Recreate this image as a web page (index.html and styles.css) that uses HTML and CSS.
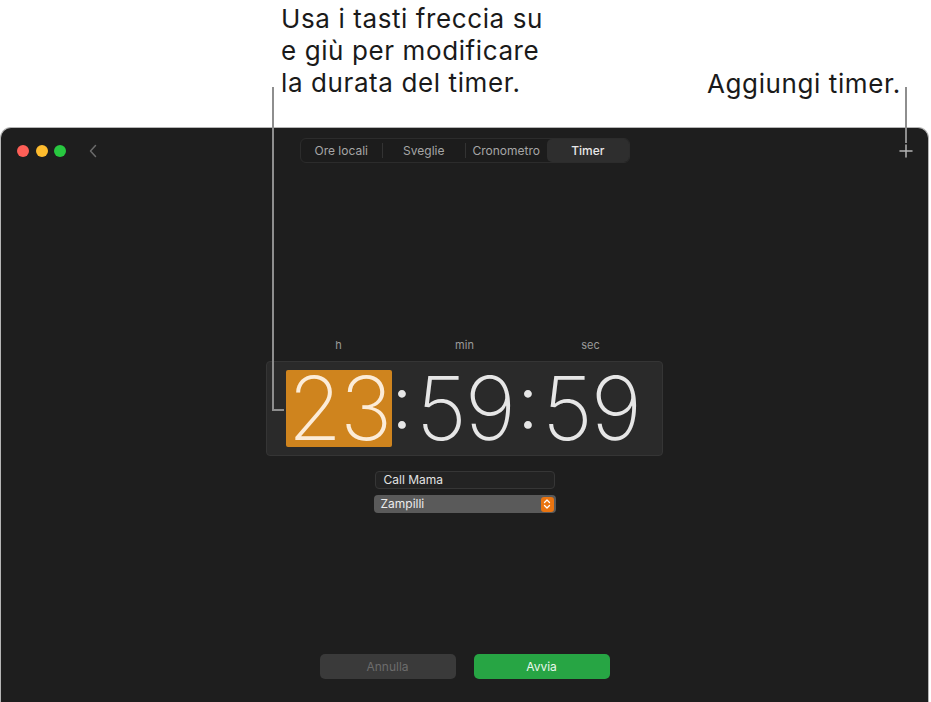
FILE: index.html
```html
<!DOCTYPE html>
<html lang="it">
<head>
<meta charset="utf-8">
<title>Timer</title>
<link rel="stylesheet" href="styles.css">
</head>
<body>
<div class="page">
  <div class="callout callout-left">Usa i tasti freccia su<br>e giù per modificare<br>la durata del timer.</div>
  <div class="callout callout-right">Aggiungi timer.</div>
  <div class="leader leader-left"></div>
  <div class="leader leader-left-foot"></div>
  <div class="leader leader-right"></div>

  <div class="window">
    <div class="titlebar">
      <div class="tb-left">
        <span class="light red"></span>
        <span class="light yellow"></span>
        <span class="light green"></span>
        <svg class="back" width="10" height="14" viewBox="0 0 10 14"><path d="M7.5 1.5 L2.5 7 L7.5 12.5" fill="none" stroke="#6b6b6b" stroke-width="1.5" stroke-linecap="round" stroke-linejoin="round"/></svg>
      </div>
      <div class="segmented">
        <span class="seg">Ore locali</span>
        <span class="sep"></span>
        <span class="seg">Sveglie</span>
        <span class="sep"></span>
        <span class="seg">Cronometro</span>
        <span class="seg selected">Timer</span>
      </div>
      <div class="tb-right">
        <svg class="plus" width="14" height="14" viewBox="0 0 14 14"><path d="M7 1 V13 M1 7 H13" stroke="#b4b4b4" stroke-width="1.5" stroke-linecap="round"/></svg>
      </div>
    </div>

    <div class="content">
      <div class="units">
        <span>h</span><span>min</span><span>sec</span>
      </div>
      <div class="clock">
        <span class="num active">23</span><span class="colon">:</span><span class="num">59</span><span class="colon">:</span><span class="num">59</span>
      </div>
      <div class="fields">
        <div class="textfield">Call Mama</div>
        <div class="popup">
          <span>Zampilli</span>
          <span class="stepper">
            <svg width="8" height="12" viewBox="0 0 8 12"><path d="M1.5 4.5 L4 2 L6.5 4.5 M1.5 7.5 L4 10 L6.5 7.5" fill="none" stroke="#fff" stroke-width="1.3" stroke-linecap="round" stroke-linejoin="round"/></svg>
          </span>
        </div>
      </div>
      <div class="buttons">
        <button class="btn cancel">Annulla</button>
        <button class="btn start">Avvia</button>
      </div>
    </div>
  </div>
</div>
</body>
</html>
```
FILE: styles.css
```css
* { box-sizing: border-box; }
html, body { margin: 0; padding: 0; background: #fff; }
body {
  font-family: Inter, "Noto Sans", "Liberation Sans", sans-serif;
  width: 931px;
  height: 702px;
  overflow: hidden;
}
.page { position: relative; width: 931px; height: 702px; padding-top: 127px; }

.callout {
  position: absolute;
  color: #1a1a1a;
  font-size: 26px;
  line-height: 32px;
  letter-spacing: 0.6px;
}
.callout-left { left: 281px; top: 3px; }
.callout-right { left: 707px; top: 68px; }

.leader { position: absolute; background: #8e8e8e; }
.leader-left { left: 272px; top: 87px; width: 2px; height: 324px; }
.leader-left-foot { left: 272px; top: 409px; width: 12px; height: 2px; }
.leader-right { left: 905px; top: 87px; width: 2px; height: 56px; }

.window {
  width: 929px;
  height: 585px;
  background: #1e1e1e;
  border: 1px solid #b5b5b5;
  border-bottom: none;
  border-radius: 11px 11px 0 0;
  display: flex;
  flex-direction: column;
}

.titlebar {
  height: 45px;
  display: grid;
  grid-template-columns: 1fr auto 1fr;
  align-items: center;
}
.tb-left { display: flex; align-items: center; padding-left: 16px; }
.light { width: 12px; height: 12px; border-radius: 50%; margin-right: 6.5px; }
.red { background: #fe5f57; }
.yellow { background: #febc2e; }
.green { background: #28c840; }
.back { margin-left: 15px; }
.tb-right { display: flex; justify-content: flex-end; padding-right: 15px; }

.segmented {
  width: 330px;
  height: 25px;
  border: 1px solid #2c2c2c;
  border-radius: 6px;
  background: #1c1c1c;
  display: flex;
  align-items: center;
}
.seg {
  flex: 1;
  text-align: center;
  font-size: 12px;
  color: #a6a6a6;
  line-height: 23px;
}
.sep { width: 1px; height: 15px; background: #333; }
.seg.selected {
  background: #2e2e2e;
  color: #e8e8e8;
  border-radius: 5px;
  font-weight: 500;
}

.content {
  display: flex;
  flex-direction: column;
  align-items: center;
  padding-top: 165px;
}
.units {
  display: flex;
  width: 378px;
  font-size: 11px;
  line-height: 14px;
  color: #9a9a9a;
}
.units span { flex: 1; text-align: center; }

.clock {
  margin-top: 9px;
  width: 397px;
  height: 95px;
  background: #2a2a2a;
  border: 1px solid #353535;
  border-radius: 4px;
  display: flex;
  align-items: center;
  padding-left: 19px;
  font-weight: 200;
  color: #e6e6e6;
}
.num {
  width: 106px;
  height: 77px;
  font-size: 88px;
  line-height: 77px;
  text-align: center;
  letter-spacing: -2px;
  border-radius: 2px;
}
.num.active { background: #cf841e; color: #fcecd8; }
.colon {
  width: 20px;
  height: 77px;
  font-size: 74px;
  font-weight: 300;
  line-height: 74px;
  text-align: center;
  font-feature-settings: "case" 1;
  display: flex;
  align-items: center;
  justify-content: center;
}

.fields {
  margin-top: 15px;
  display: flex;
  flex-direction: column;
  align-items: center;
  gap: 6px;
}
.textfield {
  width: 180px;
  height: 18px;
  background: #232323;
  border: 1px solid #363636;
  border-radius: 4px;
  font-size: 12px;
  line-height: 16px;
  color: #e2e2e2;
  padding-left: 8px;
}
.popup {
  width: 182px;
  height: 18px;
  background: #5a5a5a;
  border-radius: 4px;
  font-size: 12px;
  line-height: 18px;
  color: #ececec;
  padding-left: 7px;
  padding-right: 2px;
  display: flex;
  justify-content: space-between;
  align-items: center;
}
.stepper {
  width: 13px;
  height: 15px;
  background: #ea7410;
  border-radius: 3px;
  display: flex;
  align-items: center;
  justify-content: center;
}

.buttons {
  margin-top: 141px;
  display: flex;
  gap: 18px;
}
.btn {
  width: 136px;
  height: 25px;
  border: none;
  border-radius: 5px;
  font-family: inherit;
  font-size: 12px;
}
.cancel { background: #3a3a3a; color: #6c6c6c; }
.start { background: #27a544; color: #eaf7ec; }
```
